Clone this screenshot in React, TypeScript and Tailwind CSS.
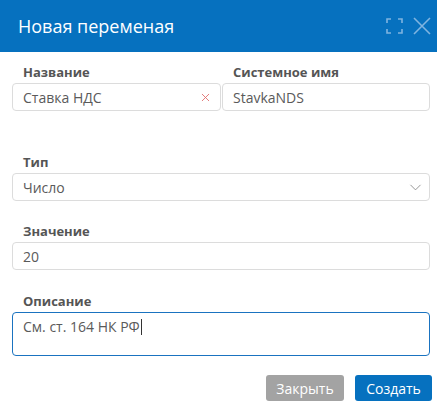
import { X, ChevronDown } from "lucide-react"

// Поле формы с подписью
function Field({
  label,
  children,
  className = "",
}: {
  label: string
  children: React.ReactNode
  className?: string
}) {
  return (
    <div className={className}>
      <div className="h-4 pl-[11px] text-[13px] leading-4 font-bold text-[#555]">{label}</div>
      <div className="mt-[3px]">{children}</div>
    </div>
  )
}

const inputCls =
  "flex h-[28px] items-center rounded-[4px] border border-[#dcdcdc] px-[10px] text-[14px] text-[#5a5a5a]"

export default function App() {
  return (
    <div
      className="h-[408px] w-[437px] overflow-hidden bg-white"
      style={{ fontFamily: '"Open Sans", "Liberation Sans", sans-serif' }}
    >
      {/* Шапка модалки */}
      <header className="flex h-[52px] items-center justify-between bg-[#0671bf] pr-[4px] pl-[18px]">
        <span className="text-[18px] text-white">Новая переменая</span>
        <div className="flex items-center gap-[9px] text-[#7fb4e0]">
          <svg width="17" height="16" viewBox="0 0 17 16" fill="none" stroke="currentColor" strokeWidth="1.6">
            <path d="M1 5V1h4M12 1h4v4M16 11v4h-4M5 15H1v-4" />
          </svg>
          <svg width="21" height="18" viewBox="0 0 21 18" fill="none" stroke="currentColor" strokeWidth="1.6">
            <path d="M2 1l16 16M18 1L2 17" />
          </svg>
        </div>
      </header>

      <div className="pt-[12px] pr-[7px] pl-[12px]">
        {/* Название + системное имя */}
        <div className="flex gap-[1px]">
          <Field label="Название" className="w-[209px]">
            <div className={`${inputCls} justify-between`}>
              <span>Ставка НДС</span>
              <X size={13} strokeWidth={1.6} className="mr-[-2px] text-[#e06a6a]" />
            </div>
          </Field>
          <Field label="Системное имя" className="flex-1">
            <div className={inputCls}>StavkaNDS</div>
          </Field>
        </div>

        <Field label="Тип" className="mt-[43px]">
          <div className={`${inputCls} justify-between`}>
            <span>Число</span>
            <ChevronDown size={19} strokeWidth={1.1} className="mr-[-6px] text-[#888]" />
          </div>
        </Field>

        <Field label="Значение" className="mt-[22px]">
          <div className={inputCls}>20</div>
        </Field>

        <Field label="Описание" className="mt-[23px]">
          <div className="h-[44px] rounded-[4px] border border-[#1a73c0] px-[10px] pt-[3px] text-[14px] leading-5 text-[#5a5a5a]">
            См. ст. 164 НК РФ
            <span className="ml-[1px] inline-block h-[16px] w-px translate-y-[3px] bg-[#333]" />
          </div>
        </Field>

        {/* Кнопки */}
        <div className="mt-[19px] flex justify-end gap-[11px]">
          <button className="h-[26px] w-[78px] rounded-[3px] bg-[#a3a3a3] text-[14px] text-white">
            Закрыть
          </button>
          <button className="mr-[-2px] h-[26px] w-[77px] rounded-[3px] bg-[#0671bf] text-[14px] text-white">
            Создать
          </button>
        </div>
      </div>
    </div>
  )
}
